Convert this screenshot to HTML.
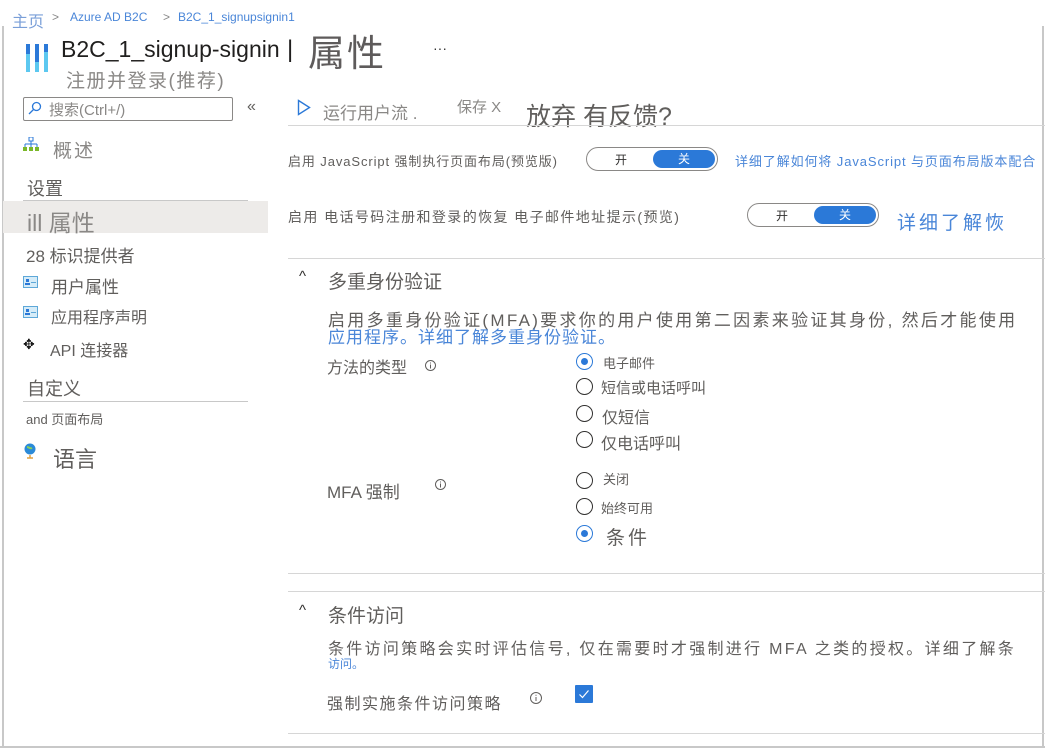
<!DOCTYPE html>
<html><head><meta charset="utf-8"><style>
*{margin:0;padding:0;box-sizing:border-box}
body{width:1045px;height:748px;background:#fff;position:relative;overflow:hidden;font-family:"Liberation Sans","Noto Sans CJK SC",sans-serif;color:#605e5c}
.a{position:absolute;white-space:nowrap}
.l{color:#4a86d8}
.hr{position:absolute;height:1px;background:#d6d6d6}
.tg{position:absolute;width:132px;height:24px;border:1px solid #8a8886;border-radius:12px}
.tg .on{position:absolute;right:2px;top:2px;width:62px;height:18px;border-radius:9px;background:#2b79d8;color:#fff;font-size:12px;text-align:center;line-height:18px}
.tg .off{position:absolute;left:28px;top:3px;font-size:12px;color:#323130}
.r{position:absolute;width:17px;height:17px;border:1.5px solid #323130;border-radius:50%}
.r.s{border-color:#2b79d8}
.r.s:after{content:"";position:absolute;left:3.5px;top:3.5px;width:7px;height:7px;border-radius:50%;background:#2b79d8}
</style></head><body>
<div style="position:absolute;left:2px;top:26px;width:2px;height:722px;background:#c8c8c8"></div>
<div style="position:absolute;left:1042px;top:26px;width:2px;height:722px;background:#c8c8c8"></div>
<div style="position:absolute;left:0;top:746px;width:1045px;height:2px;background:#c8c8c8"></div>

<div class="a" style="left:12px;top:8px;font-size:16px;color:#7a9fd8">主页</div>
<div class="a" style="left:52px;top:10px;font-size:12px;color:#888">&gt;</div>
<div class="a l" style="left:70px;top:10px;font-size:12px">Azure AD B2C</div>
<div class="a" style="left:163px;top:10px;font-size:12px;color:#888">&gt;</div>
<div class="a l" style="left:178px;top:10px;font-size:12px">B2C_1_signupsignin1</div>

<svg class="a" style="left:26px;top:44px" width="22" height="28"><rect x="0" y="0" width="4" height="28" fill="#5cc8f0"/><rect x="0" y="0" width="4" height="10" fill="#2b79d8"/><rect x="9" y="0" width="4" height="28" fill="#5cc8f0"/><rect x="9" y="0" width="4" height="18" fill="#2b79d8"/><rect x="18" y="0" width="4" height="28" fill="#5cc8f0"/><rect x="18" y="0" width="4" height="8" fill="#2b79d8"/></svg>
<div class="a" style="left:61px;top:36px;font-size:23px;color:#201f1e">B2C_1_signup-signin</div>
<div class="a" style="left:287px;top:36px;font-size:24px;color:#201f1e">|</div>
<div class="a" style="left:308px;top:34px;font-size:37px;color:#5e5b5b;line-height:1.1;letter-spacing:2px">属性</div>
<div class="a" style="left:433px;top:40px;font-size:14px;color:#323130">···</div>
<div class="a" style="left:66px;top:66px;font-size:19px;color:#8a8886;letter-spacing:1.5px">注册并登录(推荐)</div>

<div style="position:absolute;left:23px;top:97px;width:210px;height:24px;border:1px solid #8a8886;border-radius:2px"></div>
<svg class="a" style="left:28px;top:101px" width="14" height="14"><circle cx="8.5" cy="5.5" r="4" fill="none" stroke="#2b79d8" stroke-width="1.3"/><line x1="5.5" y1="8.5" x2="1" y2="13" stroke="#2b79d8" stroke-width="1.3"/></svg>
<div class="a" style="left:49px;top:99px;font-size:15px;color:#8a8886">搜索(Ctrl+/)</div>
<div class="a" style="left:247px;top:98px;font-size:16px;color:#605e5c">«</div>

<svg class="a" style="left:23px;top:137px" width="16" height="15"><rect x="6" y="0" width="4" height="4" fill="none" stroke="#2b79d8"/><path d="M8 4v3M2 7h12M2 7v3M8 7v3M14 7v3" stroke="#2b79d8" fill="none"/><rect x="0" y="10" width="4" height="4" fill="#7ab829"/><rect x="6" y="10" width="4" height="4" fill="#7ab829"/><rect x="12" y="10" width="4" height="4" fill="#7ab829"/></svg>
<div class="a" style="left:53px;top:136px;font-size:19px;color:#8a8886;letter-spacing:2px">概述</div>
<div class="a" style="left:27px;top:175px;font-size:18px;color:#605e5c">设置</div>
<div class="hr" style="left:23px;top:200px;width:225px;background:#c8c8c8"></div>
<div style="position:absolute;left:3px;top:201px;width:265px;height:32px;background:#edebe9"></div>
<div class="a" style="left:27px;top:204px;font-size:23px;color:#8a8886">ill 属性</div>
<div class="a" style="left:26px;top:242px;font-size:17px;color:#605e5c">28 标识提供者</div>
<svg class="a" style="left:23px;top:276px" width="15" height="12"><rect x="0.5" y="0.5" width="14" height="11" fill="#d6ecf8" stroke="#5ea8d8"/><rect x="3" y="3" width="3" height="3" fill="#2b79d8"/><rect x="2" y="7" width="5" height="2" fill="#2b79d8"/><rect x="8" y="6" width="5" height="1" fill="#5ea8d8"/></svg>
<div class="a" style="left:51px;top:273px;font-size:17px;color:#605e5c">用户属性</div>
<svg class="a" style="left:23px;top:306px" width="15" height="12"><rect x="0.5" y="0.5" width="14" height="11" fill="#d6ecf8" stroke="#5ea8d8"/><rect x="3" y="3" width="3" height="3" fill="#2b79d8"/><rect x="2" y="7" width="5" height="2" fill="#2b79d8"/><rect x="8" y="6" width="5" height="1" fill="#5ea8d8"/></svg>
<div class="a" style="left:51px;top:304px;font-size:16px;color:#605e5c">应用程序声明</div>
<div class="a" style="left:23px;top:336px;font-size:14px;color:#111">✥</div>
<div class="a" style="left:50px;top:337px;font-size:16px;color:#605e5c">API 连接器</div>
<div class="a" style="left:27px;top:375px;font-size:18px;color:#605e5c">自定义</div>
<div class="hr" style="left:23px;top:401px;width:225px;background:#c8c8c8"></div>
<div class="a" style="left:26px;top:409px;font-size:13px;color:#605e5c">and 页面布局</div>
<svg class="a" style="left:24px;top:443px" width="13" height="16"><circle cx="6" cy="6" r="5.5" fill="#2b8ad8"/><path d="M3 4c2 0 3 2 5 1" stroke="#8ad05a" fill="none" stroke-width="2"/><path d="M6 12v3M3 15h6" stroke="#e0a040" stroke-width="1.5"/></svg>
<div class="a" style="left:53px;top:442px;font-size:22px;color:#605e5c">语言</div>

<svg class="a" style="left:297px;top:99px" width="14" height="17"><path d="M1.5 1.5L12.5 8.5L1.5 15.5Z" fill="none" stroke="#2b79d8" stroke-width="1.4"/></svg>
<div class="a" style="left:323px;top:99px;font-size:17px;color:#8a8886">运行用户流 .</div>
<div class="a" style="left:457px;top:96px;font-size:15px;color:#8a8886">保存 X</div>
<div class="a" style="left:526px;top:97px;font-size:25px;color:#605e5c">放弃 有反馈?</div>
<div class="hr" style="left:288px;top:125px;width:757px"></div>

<div class="a" style="left:288px;top:151px;font-size:13px;color:#605e5c;letter-spacing:0.9px">启用 JavaScript 强制执行页面布局(预览版)</div>
<div class="tg" style="left:586px;top:147px"><span class="off">开</span><span class="on">关</span></div>
<div class="a l" style="left:735px;top:151px;font-size:13px;letter-spacing:0.9px">详细了解如何将 JavaScript 与页面布局版本配合</div>

<div class="a" style="left:288px;top:207px;font-size:14px;color:#605e5c;letter-spacing:1.4px">启用 电话号码注册和登录的恢复 电子邮件地址提示(预览)</div>
<div class="tg" style="left:747px;top:203px"><span class="off">开</span><span class="on">关</span></div>
<div class="a l" style="left:897px;top:208px;font-size:19px;letter-spacing:3px">详细了解恢</div>

<div class="hr" style="left:288px;top:258px;width:757px"></div>
<div class="a" style="left:299px;top:268px;font-size:15px;color:#323130">^</div>
<div class="a" style="left:328px;top:267px;font-size:19px;color:#605e5c">多重身份验证</div>
<div class="a" style="left:328px;top:306px;font-size:17px;color:#605e5c;letter-spacing:2.3px">启用多重身份验证(MFA)要求你的用户使用第二因素来验证其身份, 然后才能使用</div>
<div class="a l" style="left:328px;top:323px;font-size:17px;letter-spacing:1px">应用程序。详细了解多重身份验证。</div>

<div class="a" style="left:327px;top:354px;font-size:16px;color:#605e5c">方法的类型</div>
<svg class="a" style="left:425px;top:360px" width="11" height="11"><circle cx="5.5" cy="5.5" r="5" fill="none" stroke="#605e5c"/><path d="M5.5 4.5v4M5.5 2.5v1" stroke="#605e5c"/></svg>
<div class="r s" style="left:576px;top:353px"></div><div class="a" style="left:603px;top:353px;font-size:13px;color:#605e5c">电子邮件</div>
<div class="r" style="left:576px;top:378px"></div><div class="a" style="left:601px;top:377px;font-size:15px;color:#605e5c">短信或电话呼叫</div>
<div class="r" style="left:576px;top:405px"></div><div class="a" style="left:602px;top:404px;font-size:16px;color:#605e5c">仅短信</div>
<div class="r" style="left:576px;top:431px"></div><div class="a" style="left:601px;top:430px;font-size:16px;color:#605e5c">仅电话呼叫</div>

<div class="a" style="left:327px;top:478px;font-size:17px;color:#605e5c">MFA 强制</div>
<svg class="a" style="left:435px;top:479px" width="11" height="11"><circle cx="5.5" cy="5.5" r="5" fill="none" stroke="#605e5c"/><path d="M5.5 4.5v4M5.5 2.5v1" stroke="#605e5c"/></svg>
<div class="r" style="left:576px;top:472px"></div><div class="a" style="left:603px;top:469px;font-size:13px;color:#605e5c">关闭</div>
<div class="r" style="left:576px;top:498px"></div><div class="a" style="left:601px;top:498px;font-size:13px;color:#605e5c">始终可用</div>
<div class="r s" style="left:576px;top:525px"></div><div class="a" style="left:606px;top:523px;font-size:19px;color:#605e5c;letter-spacing:3px">条件</div>

<div class="hr" style="left:288px;top:573px;width:757px"></div>
<div class="hr" style="left:288px;top:591px;width:757px"></div>
<div class="a" style="left:299px;top:602px;font-size:15px;color:#323130">^</div>
<div class="a" style="left:328px;top:601px;font-size:19px;color:#605e5c">条件访问</div>
<div class="a" style="left:328px;top:635px;font-size:16px;color:#605e5c;letter-spacing:2.3px">条件访问策略会实时评估信号, 仅在需要时才强制进行 MFA 之类的授权。详细了解条</div>
<div class="a l" style="left:328px;top:655px;font-size:12px">访问。</div>
<div class="a" style="left:327px;top:690px;font-size:16px;color:#605e5c;letter-spacing:1.5px">强制实施条件访问策略</div>
<svg class="a" style="left:530px;top:692px" width="12" height="12"><circle cx="6" cy="6" r="5.5" fill="none" stroke="#605e5c"/><path d="M6 5v4M6 2.7v1" stroke="#605e5c"/></svg>
<div style="position:absolute;left:575px;top:685px;width:18px;height:18px;background:#2b79d8;border-radius:1px"></div>
<svg class="a" style="left:575px;top:685px" width="18" height="18"><path d="M4.5 9.5l3 3l6-7" stroke="#fff" fill="none" stroke-width="1.2"/></svg>
<div class="hr" style="left:288px;top:733px;width:757px"></div>
</body></html>
